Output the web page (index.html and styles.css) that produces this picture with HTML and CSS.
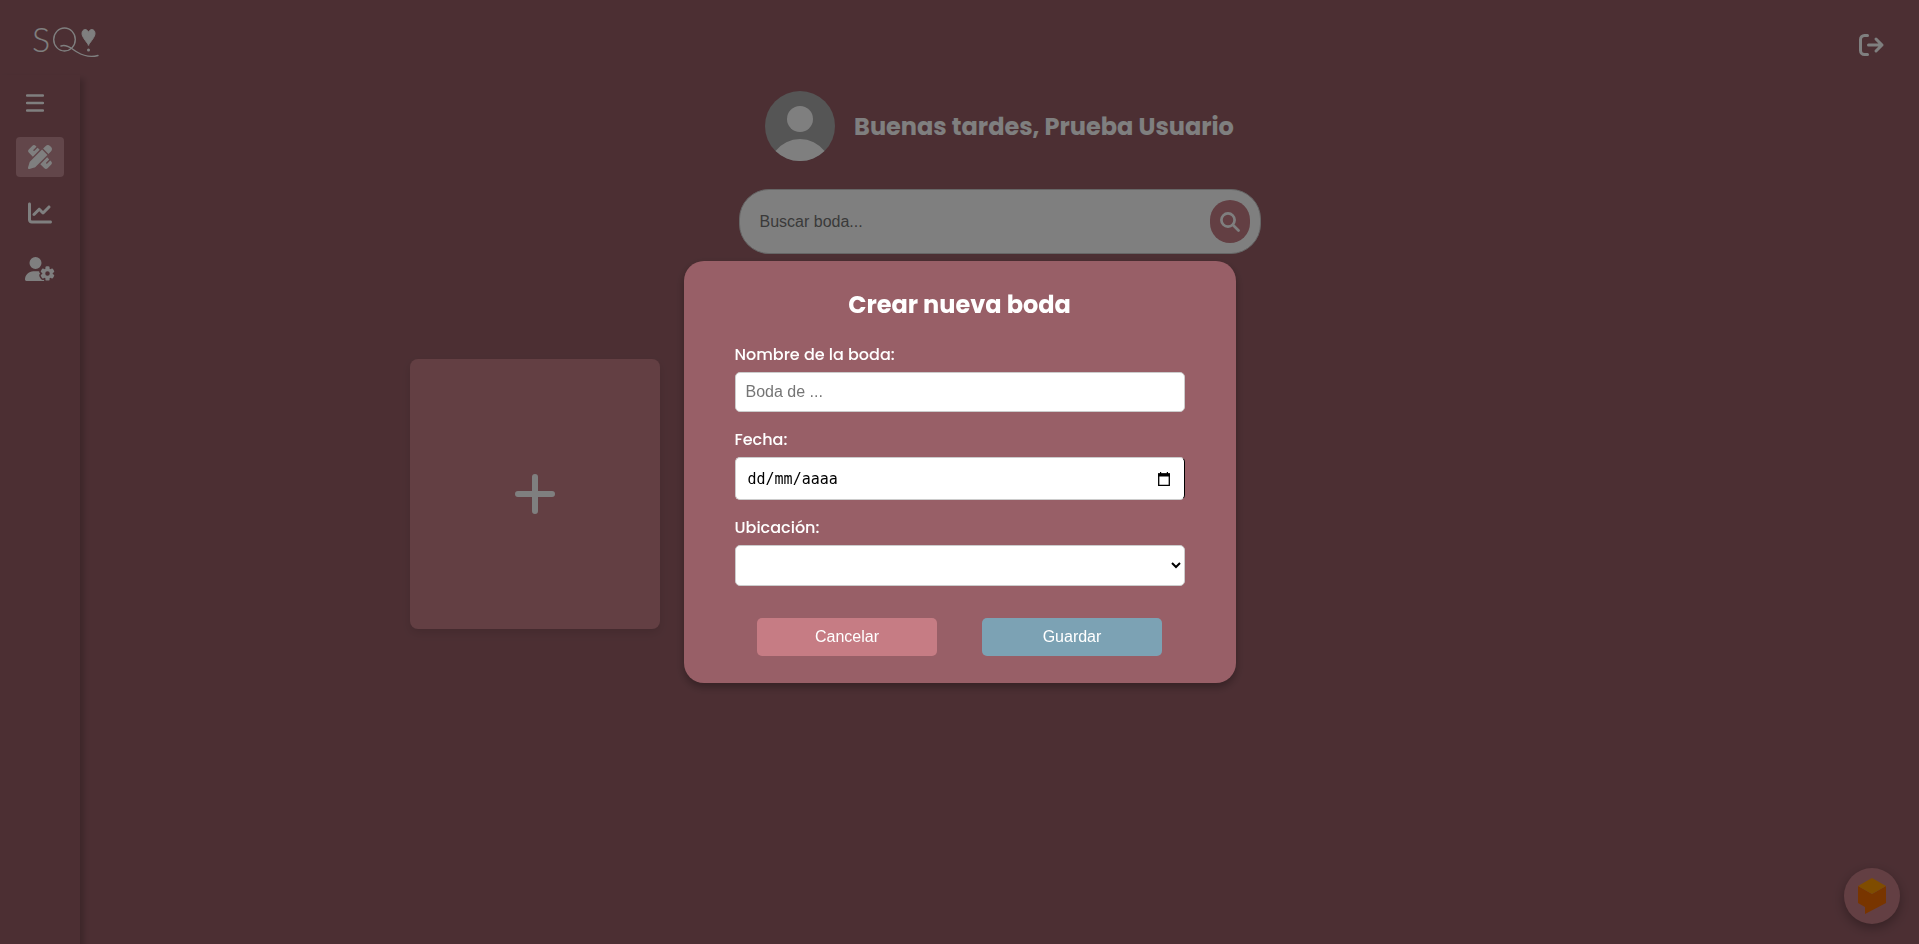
FILE: index.html
```html
<!DOCTYPE html>
<html lang="es">
<head>
    <meta charset="utf-8">
    <meta name="viewport" content="width=device-width, initial-scale=1">
    <title>Bodas</title>
    <link rel="stylesheet" href="styles.css">
</head>
<body>

<header class="header">
    <a href="#" class="logo" aria-label="Inicio">
        <svg width="66" height="32" viewBox="0 0 66 32" fill="none" stroke="#fff" stroke-width="1.400" stroke-linecap="round">
            <text x="-2" y="25" class="logo-text">S</text>
            <ellipse cx="30.500" cy="12.500" rx="10.800" ry="11.500"/>
            <path d="M27 19c6-2 11 3 16 6s12 6 21 3.500"/>
            <path d="M54.500 18C52 14 48 10 48 6.500c0-5 5.500-5 6.500-1 1-4 6.500-4 6.500 1 0 3.500-4 7.500-6.500 11.500z" fill="#fff" stroke-width="1"/>
            <circle cx="54.500" cy="23" r="1.500" fill="#fff" stroke="none"/>
        </svg>
    </a>
    <button type="button" class="logout" aria-label="Salir">
        <svg width="26" height="22" viewBox="0 0 26 22" fill="none" stroke="#fff" stroke-width="3" stroke-linecap="round" stroke-linejoin="round">
            <path d="M8.500 1.500h-3a4 4 0 0 0-4 4v11a4 4 0 0 0 4 4h3"/>
            <path d="M9.500 11H23M17 5l6 6-6 6"/>
        </svg>
    </button>
</header>

<div class="layout">
    <nav class="sidebar">
        <button type="button" class="menu" aria-label="Menú">
            <svg width="18" height="18" viewBox="0 0 18 18" stroke="#fff" stroke-width="2.300" stroke-linecap="round">
                <path d="M1 1.500h16M1 9h16M1 16.500h16"/>
            </svg>
        </button>
        <a href="#" class="item active" aria-label="Bodas">
            <svg width="24" height="24" viewBox="0 0 512 512" fill="#fff">
                <path d="M469.300 19.300l23.400 23.400c25 25 25 65.500 0 90.500l-56.400 56.400L322.300 75.700l56.400-56.400c25-25 65.500-25 90.500 0zM44.900 353.200L299.700 98.300 413.700 212.300 158.800 467.100c-6.700 6.700-15.100 11.600-24.200 14.200l-104 29.700c-8.400 2.400-17.400 .1-23.600-6.100s-8.500-15.200-6.100-23.600l29.700-104c2.600-9.200 7.500-17.500 14.200-24.200zM249.400 103.400L103.400 249.400 16 161.900c-18.700-18.700-18.700-49.100 0-67.900L94.100 16c18.700-18.700 49.100-18.700 67.900 0l19.800 19.800c-.3 .3-.7 .6-1 .9l-64 64c-6.200 6.200-6.200 16.400 0 22.600s16.400 6.200 22.600 0l64-64c.3-.3 .6-.7 .9-1l45.100 45.100zM408.600 262.600l45.100 45.100c-.3 .3-.7 .6-1 .9l-64 64c-6.200 6.200-6.200 16.400 0 22.600s16.400 6.200 22.600 0l64-64c.3-.3 .6-.7 .9-1L496 350.100c18.700 18.700 18.700 49.100 0 67.900L417.900 496c-18.700 18.700-49.100 18.700-67.900 0l-87.400-87.400L408.600 262.600z"/>
            </svg>
        </a>
        <a href="#" class="item" aria-label="Estadísticas">
            <svg width="24" height="24" viewBox="0 0 512 512" fill="#fff">
                <path d="M64 64c0-17.700-14.300-32-32-32S0 46.300 0 64V400c0 44.200 35.800 80 80 80H480c17.700 0 32-14.300 32-32s-14.300-32-32-32H80c-8.800 0-16-7.200-16-16V64zm406.600 86.600c12.500-12.500 12.500-32.800 0-45.300s-32.800-12.500-45.300 0L320 210.700l-57.400-57.400c-12.500-12.500-32.800-12.500-45.300 0l-112 112c-12.500 12.500-12.500 32.800 0 45.300s32.800 12.500 45.300 0L240 221.300l57.400 57.400c12.500 12.500 32.800 12.500 45.300 0l128-128z"/>
            </svg>
        </a>
        <a href="#" class="item" aria-label="Usuarios">
            <svg width="30" height="24" viewBox="0 0 640 512" fill="#fff">
                <path d="M224 0a128 128 0 1 1 0 256A128 128 0 1 1 224 0zM178.300 304h91.400c11.800 0 23.400 1.200 34.500 3.300c-2.100 18.500 7.400 35.600 21.800 44.800c-16.600 10.600-26.700 31.600-20 53.300c4 12.900 9.400 25.500 16.400 37.600s15.200 23.100 24.400 33c15.700 16.900 39.600 18.400 57.200 8.700v.9c0 9.200 2.700 18.500 7.900 26.300H29.700C13.300 512 0 498.700 0 482.300C0 383.800 79.800 304 178.300 304zM436 218.200c0-7 4.500-13.300 11.300-14.800c10.500-2.400 21.500-3.700 32.700-3.700s22.200 1.300 32.700 3.700c6.800 1.500 11.300 7.800 11.300 14.800v30.600c7.900 3.400 15.400 7.700 22.300 12.800l24.900-14.300c6.100-3.500 13.700-2.700 18.500 2.400c7.600 8.100 14.300 17.200 20.100 27.200s10.300 20.400 13.500 31c2.100 6.700-1.100 13.700-7.200 17.200l-25 14.400c.4 4 .7 8.100 .7 12.300s-.2 8.200-.7 12.300l25 14.400c6.100 3.500 9.200 10.500 7.200 17.200c-3.300 10.600-7.800 21-13.500 31s-12.500 19.100-20.100 27.200c-4.800 5.100-12.500 5.900-18.500 2.400l-24.900-14.300c-6.900 5.100-14.300 9.400-22.300 12.800l0 30.600c0 7-4.500 13.300-11.300 14.800c-10.500 2.400-21.500 3.700-32.700 3.700s-22.200-1.300-32.700-3.700c-6.800-1.500-11.300-7.800-11.300-14.800V454.800c-8-3.400-15.600-7.700-22.500-12.900l-24.700 14.300c-6.100 3.500-13.700 2.700-18.500-2.400c-7.600-8.100-14.300-17.200-20.100-27.200s-10.300-20.400-13.500-31c-2.100-6.700 1.100-13.700 7.200-17.200l24.800-14.300c-.4-4.100-.7-8.200-.7-12.400s.2-8.300 .7-12.400L343.800 325c-6.100-3.500-9.200-10.500-7.200-17.200c3.300-10.600 7.700-21 13.500-31s12.500-19.100 20.100-27.200c4.800-5.100 12.400-5.900 18.500-2.400l24.800 14.300c6.900-5.100 14.500-9.400 22.500-12.900V218.200zm92.100 133.500a48.100 48.100 0 1 0 -96.100 0 48.100 48.100 0 1 0 96.100 0z"/>
            </svg>
        </a>
    </nav>

    <main class="content">
        <div class="greeting">
            <svg class="avatar" viewBox="0 0 70 70">
                <circle cx="35" cy="35" r="35" fill="#aaa"/>
                <circle cx="35" cy="28" r="13" fill="#fff"/>
                <path d="M10.500 60a31 31 0 0 1 49 0A35 35 0 0 1 10.500 60z" fill="#fff"/>
            </svg>
            <h1>Buenas tardes, Prueba Usuario</h1>
        </div>

        <form class="search">
            <input type="text" placeholder="Buscar boda..." aria-label="Buscar boda">
            <button type="button" aria-label="Buscar">
                <svg width="20" height="20" viewBox="0 0 20 20" fill="none" stroke="#fff" stroke-width="2.700" stroke-linecap="round">
                    <circle cx="8" cy="8" r="6.600"/>
                    <path d="M13 13l5.500 5.500"/>
                </svg>
            </button>
        </form>

        <div class="cards">
            <button type="button" class="card" aria-label="Crear boda">
                <svg width="40" height="40" viewBox="0 0 40 40" stroke="#fff" stroke-width="6" stroke-linecap="round">
                    <path d="M20 3v34M3 20h34"/>
                </svg>
            </button>
        </div>
    </main>
</div>

<button type="button" class="chat" aria-label="Chat">
    <svg width="28" height="36" viewBox="0 0 28 36">
        <path d="M0 8l14 8 14-8v17L7 36v-7l-7-4z" fill="#f06a00"/>
        <path d="M14 0l14 8-14 8L0 8z" fill="#ff9800"/>
    </svg>
</button>

<div class="overlay">
    <form class="modal">
        <h2>Crear nueva boda</h2>

        <label for="nombre">Nombre de la boda:</label>
        <input type="text" id="nombre" class="field" placeholder="Boda de ...">

        <label for="fecha">Fecha:</label>
        <div class="field date">
            <input type="text" id="fecha" placeholder="dd/mm/aaaa">
            <button type="button" aria-label="Abrir calendario">
                <svg width="12" height="14" viewBox="0 0 12 14">
                    <path d="M.7 2h10.600v11.300H.7z" fill="none" stroke="#000" stroke-width="1.300"/>
                    <path d="M0 1.500h12v3H0zM2 0h1.200v2H2zM8.800 0H10v2H8.800z"/>
                </svg>
            </button>
        </div>

        <label for="ubicacion">Ubicación:</label>
        <select id="ubicacion" class="field">
            <option value=""></option>
        </select>

        <div class="buttons">
            <button type="button" class="cancel">Cancelar</button>
            <button type="submit" class="save">Guardar</button>
        </div>
    </form>
</div>

</body>
</html>
```
FILE: styles.css
```css
* {
    box-sizing: border-box;
}

body {
    margin: 0;
    min-height: 100vh;
    display: flex;
    flex-direction: column;
    background-color: #985f67;
    color: #fff;
    font-family: Poppins, Inter, sans-serif;
}

button {
    border: none;
    padding: 0;
    background: none;
    cursor: pointer;
}

input, select, .buttons button {
    font-family: "Liberation Sans", Arial, sans-serif;
    font-size: 16px;
}

svg {
    display: block;
}

.header {
    display: flex;
    justify-content: space-between;
    align-items: center;
    height: 75px;
    padding: 10px 34px 0;
}

.logo svg {
    overflow: visible;
}

.logo-text {
    font-family: Lato, sans-serif;
    font-size: 34px;
    font-weight: 300;
    fill: #fff;
    stroke: none;
}

.logout {
    padding-top: 4px;
}

.layout {
    display: flex;
    flex: 1;
}

.sidebar {
    display: flex;
    flex-direction: column;
    align-items: center;
    gap: 16px;
    width: 80px;
    padding-top: 19px;
    box-shadow: 4px 4px 6px rgba(0, 0, 0, 0.2);
}

.menu {
    align-self: flex-start;
    margin-left: 26px;
    margin-bottom: 9px;
}

.item {
    display: flex;
    justify-content: center;
    align-items: center;
    width: 48px;
    height: 40px;
    border-radius: 4px;
}

.active {
    background-color: #c48c94;
}

.content {
    flex: 1;
    display: flex;
    flex-direction: column;
    align-items: center;
    padding: 16px 20px;
}

.greeting {
    display: flex;
    align-items: center;
    gap: 19px;
    margin-bottom: 28px;
}

.greeting h1 {
    margin: 0;
    font-size: 24px;
    line-height: 35px;
}

.avatar {
    width: 70px;
    height: 70px;
}

.search {
    display: flex;
    align-items: center;
    width: 522px;
    max-width: 100%;
    height: 65px;
    padding: 0 10px 0 20px;
    background-color: #fff;
    border: 1px solid #ccc;
    border-radius: 30px;
}

.search input {
    flex: 1;
    min-width: 0;
    padding: 0;
    border: none;
    outline: none;
    background: none;
}

.search button {
    display: flex;
    justify-content: center;
    align-items: center;
    width: 40px;
    height: 43px;
    border-radius: 20px;
    background-color: #c67e86;
}

.cards {
    display: flex;
    flex-wrap: wrap;
    gap: 60px;
    width: 100%;
    max-width: 1180px;
    margin-top: 105px;
}

.card {
    display: flex;
    justify-content: center;
    align-items: center;
    width: 250px;
    height: 270px;
    border-radius: 8px;
    background-color: #c67e86;
    box-shadow: 0 4px 8px rgba(0, 0, 0, 0.1);
}

.chat {
    position: fixed;
    right: 19px;
    bottom: 20px;
    display: flex;
    justify-content: center;
    align-items: center;
    width: 56px;
    height: 56px;
    border-radius: 50%;
    background-color: #c67e86;
    box-shadow: 0 4px 12px rgba(0, 0, 0, 0.3);
}

.overlay {
    position: fixed;
    inset: 0;
    display: flex;
    justify-content: center;
    align-items: center;
    background-color: rgba(0, 0, 0, 0.5);
}

.modal {
    display: flex;
    flex-direction: column;
    width: 552px;
    max-width: 100%;
    padding: 26px 51px 27px;
    border-radius: 20px;
    background-color: #985f67;
    box-shadow: 0 4px 8px rgba(0, 0, 0, 0.3);
}

.modal h2 {
    margin: 0 0 20px;
    font-size: 24px;
    line-height: 36px;
    text-align: center;
}

.modal label {
    margin-bottom: 5px;
    font-size: 16px;
    font-weight: 500;
    line-height: 24px;
}

.field {
    height: 40px;
    margin-bottom: 16px;
    padding: 0 10px;
    border: 1px solid #ccc;
    border-radius: 5px;
    background-color: #fff;
}

.date {
    display: flex;
    align-items: center;
    height: 43px;
    padding: 0 14px 0 12px;
    border-right-color: #000;
}

.date input {
    flex: 1;
    min-width: 0;
    padding: 0;
    border: none;
    outline: none;
    font-family: "DejaVu Sans Mono", monospace;
    font-size: 15px;
}

.date input::placeholder {
    color: #000;
}

select.field {
    height: 41px;
    padding: 0;
}

.buttons {
    display: flex;
    justify-content: space-around;
    margin-top: 16px;
}

.buttons button {
    width: 180px;
    height: 38px;
    border-radius: 5px;
    color: #fff;
}

.cancel {
    background-color: #c67c84;
}

.save {
    background-color: #7ca2b4;
}
```
